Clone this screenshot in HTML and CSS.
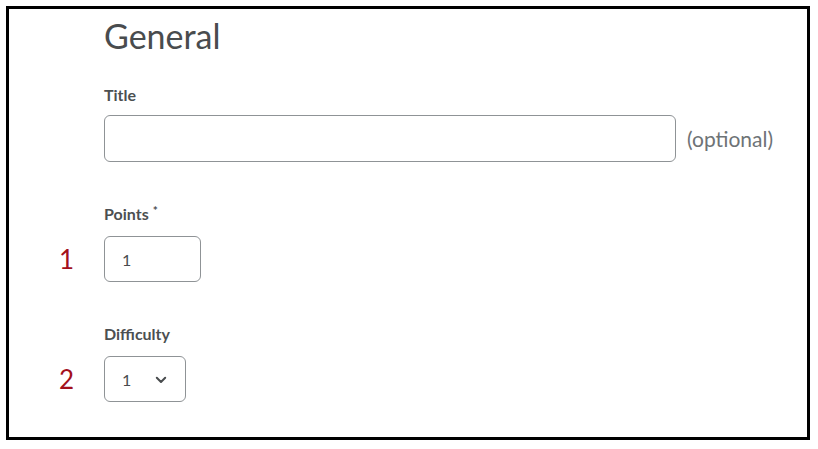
FILE: index.html
```html
<!DOCTYPE html>
<html lang="en">
<head>
<meta charset="utf-8">
<title>General</title>
<link rel="stylesheet" href="styles.css">
</head>
<body>
<div class="frame">
  <h1 class="heading">General</h1>

  <div class="field field-title">
    <label class="label" for="title">Title</label>
    <div class="control">
      <input class="input input-title" id="title" type="text">
      <span class="hint">(optional)</span>
    </div>
  </div>

  <div class="field field-points">
    <label class="label" for="points">Points<span class="req">*</span></label>
    <span class="marker">1</span>
    <div class="control">
      <input class="input input-points" id="points" type="text" value="1">
    </div>
  </div>

  <div class="field field-difficulty">
    <label class="label" for="difficulty">Difficulty</label>
    <span class="marker">2</span>
    <div class="control">
      <div class="select" id="difficulty">
        <span class="select-value">1</span>
        <svg class="chevron" width="12" height="8" viewBox="0 0 12 8" aria-hidden="true">
          <path d="M1.8 1.8 L6 6 L10.2 1.8" fill="none" stroke="#494c4e" stroke-width="2" stroke-linecap="round" stroke-linejoin="round"/>
        </svg>
      </div>
    </div>
  </div>
</div>
</body>
</html>
```

FILE: styles.css
```css
* {
  box-sizing: border-box;
}

html, body {
  margin: 0;
  padding: 0;
  background: #ffffff;
}

body {
  font-family: Lato, "Open Sans", sans-serif;
  color: #494c4e;
}

.frame {
  margin: 6px;
  width: 804px;
  height: 434px;
  border: 3px solid #000000;
  padding: 8px 0 0 0;
  display: flex;
  flex-direction: column;
}

.heading {
  margin: 0 0 0 95px;
  font-size: 34px;
  line-height: 38px;
  font-weight: 400;
  color: #494c4e;
}

.field {
  display: grid;
  grid-template-columns: 95px 1fr;
  grid-template-rows: 20px auto;
  row-gap: 11px;
  align-items: center;
}

.field-title {
  margin-top: 30px;
  row-gap: 10px;
}

.field-points,
.field-difficulty {
  margin-top: 42px;
  row-gap: 12px;
}

.label {
  grid-column: 2;
  grid-row: 1;
  font-size: 16px;
  line-height: 20px;
  font-weight: 700;
  color: #4c4f51;
}

.req {
  font-size: 12px;
  vertical-align: top;
  line-height: 14px;
  margin-left: 4px;
}

.marker {
  grid-column: 1;
  grid-row: 2;
  padding-left: 50px;
  font-family: Lato, sans-serif;
  font-size: 26px;
  line-height: 30px;
  color: #a3101c;
}

.control {
  grid-column: 2;
  grid-row: 2;
  display: flex;
  align-items: center;
  gap: 11px;
}

.input {
  height: 47px;
  border: 1px solid #8f9396;
  border-radius: 6px;
  background: #ffffff;
  font-family: Lato, sans-serif;
  font-size: 16px;
  color: #494c4e;
  padding: 0 0 0 17px;
  outline: none;
}

.input-title {
  width: 572px;
}

.input-points {
  width: 97px;
  height: 46px;
}

.hint {
  font-size: 21px;
  color: #6e7376;
}

.select {
  width: 82px;
  height: 46px;
  border: 1px solid #8f9396;
  border-radius: 6px;
  display: flex;
  align-items: center;
  padding-left: 17px;
  gap: 24px;
  font-size: 16px;
  color: #494c4e;
}

.chevron {
  display: block;
  margin-top: 2px;
}
```
